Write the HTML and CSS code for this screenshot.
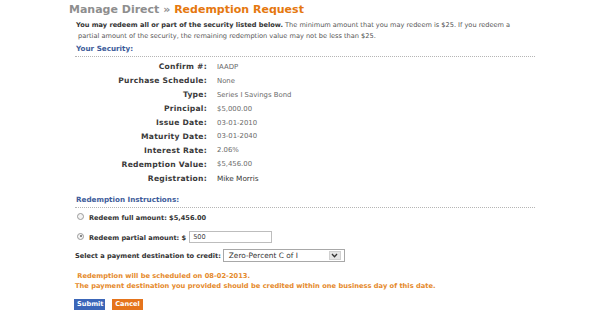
FILE: index.html
```html
<!DOCTYPE html>
<html>
<head>
<meta charset="utf-8">
<link rel="stylesheet" href="styles.css">
</head>
<body>
<div class="page">
  <h1 class="title"><span class="crumb">Manage Direct »</span> <span class="current">Redemption Request</span></h1>
  <div class="section">
    <p class="intro"><b>You may redeem all or part of the security listed below.</b> The minimum amount that you may redeem is $25. If you redeem a<br>&nbsp;partial amount of the security, the remaining redemption value may not be less than $25.</p>
    <h2 class="heading">Your Security:</h2>
    <div class="details">
      <div class="row"><span class="label">Confirm #:</span><span class="value">IAADP</span></div>
      <div class="row"><span class="label">Purchase Schedule:</span><span class="value">None</span></div>
      <div class="row"><span class="label">Type:</span><span class="value">Series I Savings Bond</span></div>
      <div class="row"><span class="label">Principal:</span><span class="value">$5,000.00</span></div>
      <div class="row"><span class="label">Issue Date:</span><span class="value">03-01-2010</span></div>
      <div class="row"><span class="label">Maturity Date:</span><span class="value">03-01-2040</span></div>
      <div class="row"><span class="label">Interest Rate:</span><span class="value">2.06%</span></div>
      <div class="row"><span class="label">Redemption Value:</span><span class="value">$5,456.00</span></div>
      <div class="row"><span class="label">Registration:</span><span class="value dark">Mike Morris</span></div>
    </div>
    <h2 class="heading heading-2">Redemption Instructions:</h2>
    <div class="options">
      <div class="option"><span class="radio"></span><span class="opt-text">Redeem full amount: $5,456.00</span></div>
      <div class="option option-2"><span class="radio checked"></span><span class="opt-text">Redeem partial amount: $</span><span class="field">500</span></div>
    </div>
    <div class="dest">
      <span class="dest-label">Select a payment destination to credit:</span>
      <span class="select"><span class="select-text">Zero-Percent C of I</span><span class="select-btn"><svg width="7" height="5" viewBox="0 0 7 5"><path d="M1 1 L3.5 3.8 L6 1" fill="none" stroke="#333" stroke-width="1.3"/></svg></span></span>
    </div>
    <p class="notice">&nbsp;Redemption will be scheduled on 08-02-2013.<br>The payment destination you provided should be credited within one business day of this date.</p>
    <div class="buttons">
      <span class="btn btn-submit">Submit</span>
      <span class="btn btn-cancel">Cancel</span>
    </div>
  </div>
</div>
</body>
</html>
```

FILE: styles.css
```css
html, body {
  margin: 0;
  padding: 0;
  background: #ffffff;
}

body {
  font-family: "DejaVu Sans", Verdana, sans-serif;
  font-size: 6.6px;
  color: #555555;
}

.page {
  width: 600px;
  height: 315px;
  padding-left: 69px;
  box-sizing: border-box;
  overflow: hidden;
}

.title {
  margin: 0;
  font-size: 11px;
  line-height: 20px;
  font-weight: bold;
  white-space: nowrap;
}

.crumb {
  color: #8e8e8e;
}

.current {
  color: #e5780f;
}

.section {
  padding-left: 6px;
  width: 460px;
}

.intro {
  margin: 0;
  padding-left: 1px;
  line-height: 11px;
  color: #555555;
  white-space: nowrap;
}

.intro b {
  color: #333333;
}

.heading {
  margin: 1px 0 0 0;
  padding: 0 0 2px 1px;
  font-size: 7.2px;
  line-height: 11px;
  font-weight: bold;
  color: #3e5c9a;
  border-bottom: 1px dotted #b5b5b5;
}

.heading-2 {
  margin-top: 9px;
  padding-bottom: 1.5px;
}

.details {
  margin-top: 3px;
}

.row {
  display: grid;
  grid-template-columns: 132px auto;
  column-gap: 10px;
  align-items: center;
  height: 13.9px;
}

.label {
  text-align: right;
  font-size: 7.6px;
  letter-spacing: 0.25px;
  font-weight: bold;
  color: #3a3a3a;
  white-space: nowrap;
}

.value {
  font-size: 6.9px;
  color: #6a6a6a;
  white-space: nowrap;
}

.value.dark {
  font-size: 7.3px;
  color: #333333;
}

.options {
  margin-top: 3px;
  padding-left: 2px;
  display: flex;
  flex-direction: column;
  gap: 6px;
}

.option {
  display: flex;
  align-items: center;
  height: 14px;
}

.radio {
  width: 5px;
  height: 5px;
  border: 1px solid #9a9a9a;
  border-radius: 50%;
  background: #f4f4f4;
  margin-right: 5px;
  margin-top: -3px;
  display: flex;
  align-items: center;
  justify-content: center;
}

.radio.checked::after {
  content: "";
  width: 2px;
  height: 2px;
  border-radius: 50%;
  background: #666666;
}

.opt-text {
  font-weight: bold;
  color: #333333;
  white-space: nowrap;
}

.field {
  width: 78px;
  height: 10px;
  margin-left: 3px;
  margin-top: -2px;
  padding-left: 3px;
  border: 1px solid #bdbdbd;
  line-height: 10px;
  color: #444444;
}

.dest {
  margin-top: 4px;
  height: 14px;
  display: flex;
  align-items: center;
}

.dest-label {
  font-weight: bold;
  color: #333333;
  white-space: nowrap;
}

.select {
  margin-left: 2px;
  width: 115px;
  height: 11px;
  border: 1px solid #a8a8a8;
  display: flex;
  align-items: center;
  justify-content: space-between;
  padding-left: 5px;
  box-sizing: content-box;
}

.select-text {
  font-size: 7.4px;
  color: #333333;
  white-space: nowrap;
}

.select-btn {
  width: 12px;
  height: 9px;
  margin-right: 3px;
  background: #e4e4e4;
  border: 1px solid #d0d0d0;
  box-sizing: border-box;
  display: flex;
  align-items: center;
  justify-content: center;
}

.notice {
  margin: 8px 0 0 0;
  line-height: 10px;
  font-size: 6.7px;
  font-weight: bold;
  color: #e58a2c;
  white-space: nowrap;
}

.buttons {
  margin-top: 8px;
  display: flex;
  gap: 7px;
  margin-left: -1px;
}

.btn {
  height: 11px;
  line-height: 11px;
  padding: 0 3px;
  font-weight: bold;
  color: #ffffff;
  text-align: center;
}

.btn-submit {
  width: 25px;
  background: #3b66b8;
}

.btn-cancel {
  width: 25px;
  background: #e5741c;
}
```
